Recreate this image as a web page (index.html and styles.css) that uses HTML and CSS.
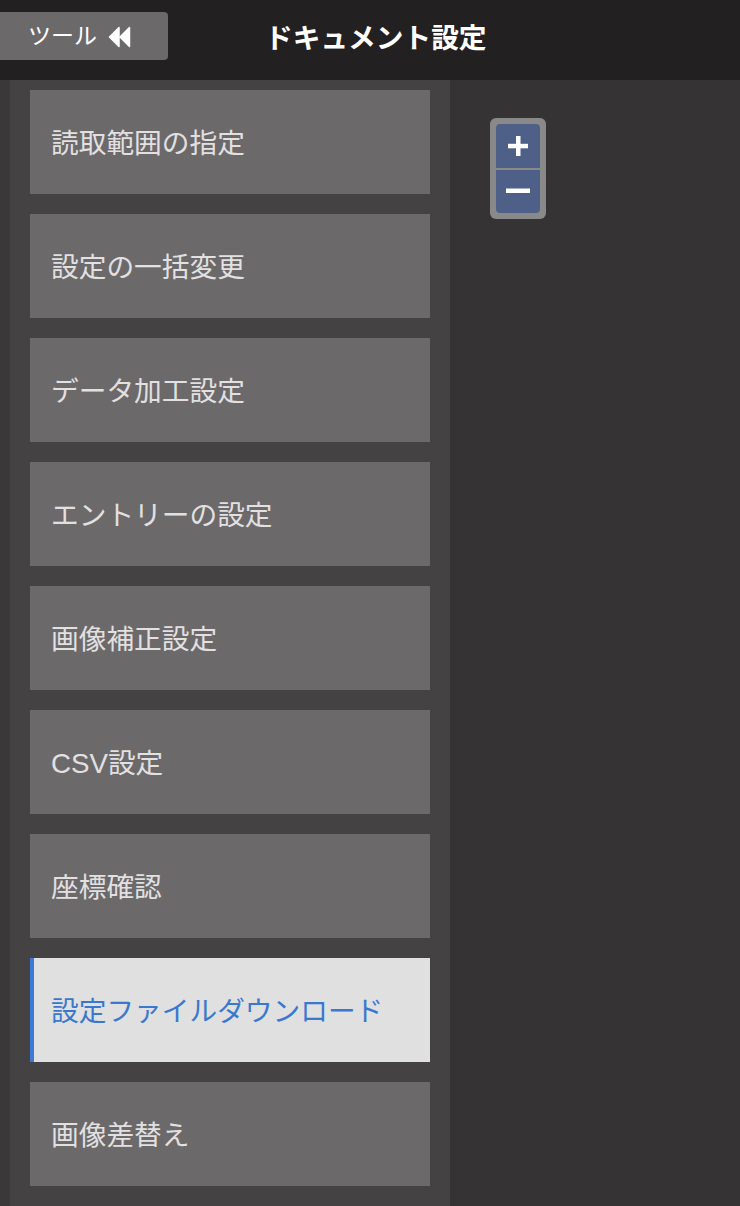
FILE: index.html
```html
<!DOCTYPE html>
<html lang="ja">
<head>
<meta charset="utf-8">
<link rel="stylesheet" href="styles.css">
</head>
<body>
<header class="header">
  <button class="tool-btn"><span>ツール</span>
    <svg class="tool-icon" width="24" height="22" viewBox="0 0 24 22"><path d="M12 1.5 L2.5 11 L12 20.5 Z" fill="#fff" stroke="#fff" stroke-width="1.5" stroke-linejoin="round"/><path d="M22.5 1.5 L13 11 L22.5 20.5 Z" fill="#fff" stroke="#fff" stroke-width="1.5" stroke-linejoin="round"/></svg>
  </button>
  <h1 class="title">ドキュメント設定</h1>
</header>
<div class="body">
  <div class="edge"></div>
  <nav class="sidebar">
    <div class="item">読取範囲の指定</div>
    <div class="item">設定の一括変更</div>
    <div class="item">データ加工設定</div>
    <div class="item">エントリーの設定</div>
    <div class="item">画像補正設定</div>
    <div class="item">CSV設定</div>
    <div class="item">座標確認</div>
    <div class="item active">設定ファイルダウンロード</div>
    <div class="item">画像差替え</div>
  </nav>
  <main class="main">
    <div class="zoom">
      <button class="zbtn">
        <svg width="22" height="22" viewBox="0 0 22 22"><rect x="9" y="1" width="4.5" height="20" fill="#fff"/><rect x="1" y="8.8" width="20" height="4.5" fill="#fff"/></svg>
      </button>
      <button class="zbtn">
        <svg width="24" height="6" viewBox="0 0 24 6"><rect x="0" y="0.5" width="24" height="4.5" fill="#fff"/></svg>
      </button>
    </div>
  </main>
</div>
</body>
</html>
```

FILE: styles.css
```css
* { box-sizing: border-box; }
html, body { margin: 0; padding: 0; }
body {
  width: 740px;
  height: 1206px;
  overflow: hidden;
  background: #353334;
  font-family: "Liberation Sans", "Noto Sans CJK JP", sans-serif;
}
.header {
  height: 80px;
  background: #222021;
  display: flex;
  align-items: flex-start;
  position: relative;
}
.tool-btn {
  margin-top: 12px;
  width: 168px;
  height: 48px;
  background: #6b696a;
  border: none;
  border-radius: 0 4px 4px 0;
  display: flex;
  align-items: center;
  padding: 0 0 0 28px;
  gap: 10px;
  color: #fff;
  font-family: inherit;
  font-size: 23px;
  font-weight: 400;
}
.tool-btn span { line-height: 1; }
.tool-icon { margin-top: 1px; }
.title {
  margin: 0 0 0 97px;
  height: 80px;
  line-height: 78px;
  color: #fff;
  font-size: 27.7px;
  font-weight: 700;
}
.body {
  display: flex;
  height: 1126px;
}
.edge {
  width: 10px;
  background: #3a3839;
}
.sidebar {
  width: 440px;
  background: #444243;
  padding: 10px 20px 0 20px;
  display: flex;
  flex-direction: column;
  gap: 20px;
}
.item {
  height: 104px;
  background: #6b696a;
  color: #e2e0e1;
  font-size: 27.7px;
  display: flex;
  align-items: center;
  padding-left: 21px;
  padding-bottom: 2px;
}
.item.active {
  background: #e0e0e0;
  color: #3a78d0;
  border-left: 4px solid #3b7bd6;
  padding-left: 17px;
}
.main {
  flex: 1;
  padding: 38px 0 0 40px;
}
.zoom {
  width: 56px;
  background: #8a898a;
  border-radius: 6px;
  padding: 6px;
  display: flex;
  flex-direction: column;
  gap: 2px;
}
.zbtn {
  width: 44px;
  height: 43.5px;
  background: #4f6088;
  border: none;
  padding: 0;
  display: flex;
  align-items: center;
  justify-content: center;
}
.zbtn:first-child { border-radius: 4px 4px 0 0; }
.zbtn:last-child { border-radius: 0 0 4px 4px; }
```
